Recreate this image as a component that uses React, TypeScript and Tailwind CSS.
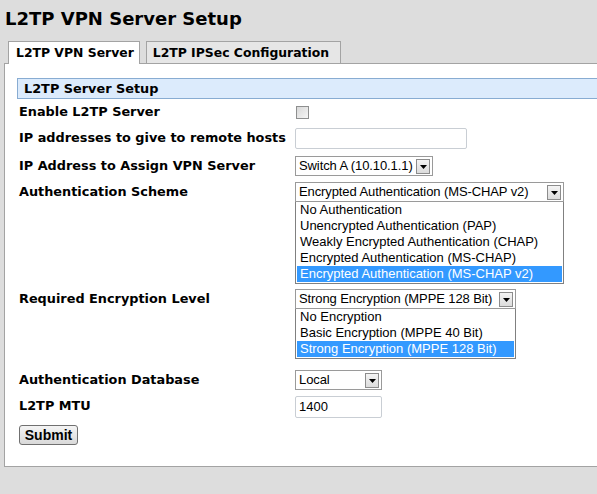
import type { ReactNode } from 'react';

type SelectProps = {
  value: string;
  width: string;
  options?: string[];
  selected?: number;
};

function ArrowButton() {
  return (
    <span className="absolute right-[2px] top-[2px] flex h-[15px] w-[14px] items-center justify-center border border-[#8c8c8c] bg-gradient-to-b from-[#f4f4f4] to-[#dcdcdc]">
      <svg width="7" height="4" viewBox="0 0 7 4">
        <path d="M0 0h7L3.5 4z" fill="#000" />
      </svg>
    </span>
  );
}

function SelectBox({ value, width, options, selected }: SelectProps) {
  return (
    <div className="flex flex-col">
      <div className={`relative h-[20px] ${width} border border-[#9a9a9a] bg-white pl-[3px] font-['Liberation_Sans',Arial,sans-serif] text-[13px] leading-[18px] tracking-[-0.1px] text-black`}>
        {value}
        <ArrowButton />
      </div>
      {options && (
        <ul className={`${width} border border-t-0 border-[#808080] bg-white px-px pb-px font-['Liberation_Sans',Arial,sans-serif] text-[13px] leading-[16px]`}>
          {options.map((opt, i) => (
            <li
              key={opt}
              className={i === selected ? 'h-[16px] bg-[#3399ff] pl-[3px] text-white' : 'h-[16px] pl-[3px] text-black'}
            >
              {opt}
            </li>
          ))}
        </ul>
      )}
    </div>
  );
}

function Row({ label, children, className = '' }: { label: string; children: ReactNode; className?: string }) {
  return (
    <div className={`flex items-start ${className}`}>
      <div className="flex h-[20px] w-[276px] shrink-0 items-center text-[12.85px] font-bold text-black">{label}</div>
      {children}
    </div>
  );
}

export default function App() {
  return (
    <div className="h-[494px] w-[597px] overflow-hidden bg-[#dddddd] font-['DejaVu_Sans',Verdana,sans-serif]">
      <h1 className="pl-[5px] pt-[6px] text-[18px] font-bold leading-[25px] text-black">L2TP VPN Server Setup</h1>

      {/* tab strip */}
      <div className="mt-[10px] flex items-end gap-[6px] pl-[8px]">
        <div className="relative z-10 -mb-px h-[23px] border border-b-0 border-[#a3a3a3] bg-white pl-[7px] pr-[5px] text-[12.4px] font-bold leading-[22px] text-black">
          L2TP VPN Server
        </div>
        <div className="h-[22px] border border-b-0 border-[#a3a3a3] bg-[#e6e6e6] pl-[6px] pr-[11px] text-[12.4px] font-bold leading-[21px] text-black">
          L2TP IPSec Configuration
        </div>
      </div>

      <div className="ml-[4px] h-[404px] w-[620px] border border-[#a3a3a3] bg-white pl-[12px] pt-[14px]">
        <div className="h-[21px] border border-[#88acd2] bg-[#dcebfc] pl-[6px] text-[12.85px] font-bold leading-[19px] text-black">
          L2TP Server Setup
        </div>

        <div className="pl-[2px]">
          <Row label="Enable L2TP Server" className="mt-[3px]">
            <div className="flex h-[20px] items-center pl-px">
              <span className="block h-[13px] w-[13px] border border-[#8e8f8f] bg-gradient-to-br from-[#d8d8d8] to-[#f6f6f6]" />
            </div>
          </Row>

          <Row label="IP addresses to give to remote hosts" className="mt-[6px]">
            <div className="h-[21px] w-[172px] rounded-[2px] border border-[#c9ced4] bg-white" />
          </Row>

          <Row label="IP Address to Assign VPN Server" className="mt-[7px]">
            <SelectBox value="Switch A (10.10.1.1)" width="w-[138px]" />
          </Row>

          <Row label="Authentication Scheme" className="mt-[6px]">
            <SelectBox
              value="Encrypted Authentication (MS-CHAP v2)"
              width="w-[269px]"
              selected={4}
              options={[
                'No Authentication',
                'Unencrypted Authentication (PAP)',
                'Weakly Encrypted Authentication (CHAP)',
                'Encrypted Authentication (MS-CHAP)',
                'Encrypted Authentication (MS-CHAP v2)',
              ]}
            />
          </Row>

          <Row label="Required Encryption Level" className="mt-[5px]">
            <SelectBox
              value="Strong Encryption (MPPE 128 Bit)"
              width="w-[221px]"
              selected={2}
              options={['No Encryption', 'Basic Encryption (MPPE 40 Bit)', 'Strong Encryption (MPPE 128 Bit)']}
            />
          </Row>

          <Row label="Authentication Database" className="mt-[11px]">
            <SelectBox value="Local" width="w-[87px]" />
          </Row>

          <Row label="L2TP MTU" className="mt-[6px]">
            <div className="h-[22px] w-[87px] rounded-[2px] border border-[#c9ced4] bg-white pl-[3px] font-['Liberation_Sans',Arial,sans-serif] text-[13px] leading-[20px] text-black">
              1400
            </div>
          </Row>

          <button
            type="button"
            className="mt-[7px] h-[20px] w-[59px] rounded-[3px] border border-[#707070] bg-gradient-to-b from-[#f4f4f4] to-[#d9d9d9] font-['Liberation_Sans',Arial,sans-serif] text-[14px] font-bold leading-[17px] text-black"
          >
            Submit
          </button>
        </div>
      </div>
    </div>
  );
}
